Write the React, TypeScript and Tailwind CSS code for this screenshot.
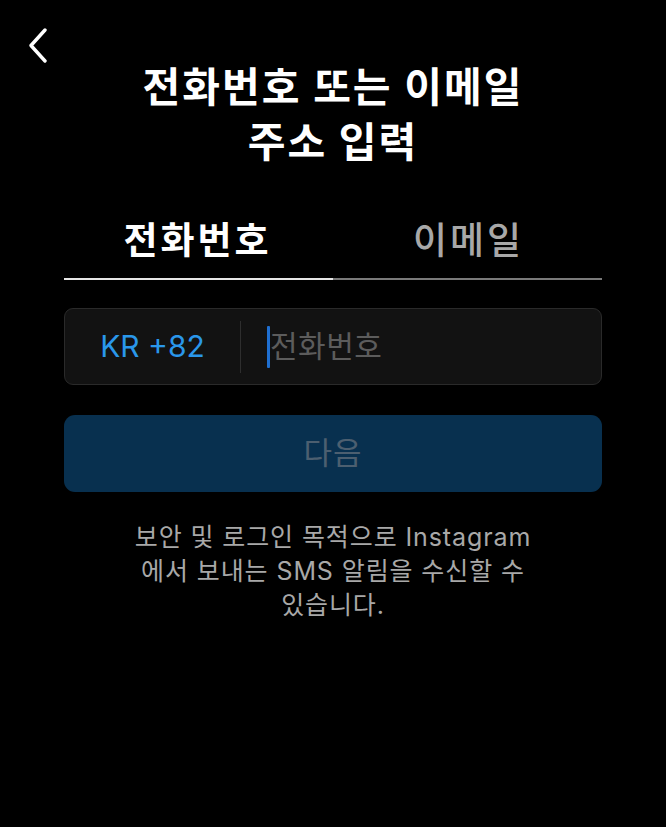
import React from "react";

const font = {
  fontFamily: 'Inter, "Noto Sans CJK KR", "Noto Sans", sans-serif',
};

export default function App() {
  return (
    <div className="w-[666px] h-[827px] bg-black text-white overflow-hidden" style={font}>
      <div className="h-[28px]" />
      <div className="px-[27px] h-[36px] flex items-start">
        <svg width="22" height="36" viewBox="0 0 22 36" fill="none">
          <path d="M18 2 L4 17.5 L18 33" stroke="white" strokeWidth="3.4" strokeLinecap="round" strokeLinejoin="round" />
        </svg>
      </div>
      <h1 className="mt-[-4px] text-center text-[41px] leading-[55px] font-bold tracking-[2px]">
        전화번호 또는 이메일
        <br />
        주소 입력
      </h1>

      <div className="mx-[64px] mt-[47px]">
        <div className="flex">
          <div className="flex-1 text-center text-[37px] leading-[48px] font-bold tracking-[3px] text-white pr-[4px]">전화번호</div>
          <div className="flex-1 text-center text-[37px] leading-[48px] font-medium tracking-[3px] text-[#a8a8a8]">이메일</div>
        </div>
        <div className="flex mt-[13px]">
          <div className="flex-1 h-[2px] bg-[#e6e6e6]" />
          <div className="flex-1 h-[2px] bg-[#7a7a7a]" />
        </div>

        <div className="mt-[28px] h-[77px] rounded-[9px] bg-[#121212] border border-[#2a2a2a] flex items-center">
          <div className="w-[175px] h-full flex items-center justify-center text-[30px] text-[#2a97ea] font-normal">
            KR +82
          </div>
          <div className="w-[1px] h-[52px] bg-[#2e2e2e]" />
          <div className="flex items-center pl-[26px]">
            <div className="w-[3px] h-[42px] bg-[#1f6fd0] rounded-[1px]" />
            <span className="text-[30px] text-[#5c5c5c] tracking-[0.5px]">전화번호</span>
          </div>
        </div>

        <div className="mt-[30px] h-[77px] rounded-[11px] bg-[#08304f] flex items-center justify-center text-[31px] tracking-[1px] text-[#4c5f70]">
          다음
        </div>
      </div>

      <p className="mt-[28px] mx-auto w-[460px] text-center text-[25px] leading-[34px] tracking-[0.9px] text-[#a8a8a8]">
        보안 및 로그인 목적으로 Instagram
        <br />
        에서 보내는 SMS 알림을 수신할 수
        <br />
        있습니다.
      </p>
    </div>
  );
}
